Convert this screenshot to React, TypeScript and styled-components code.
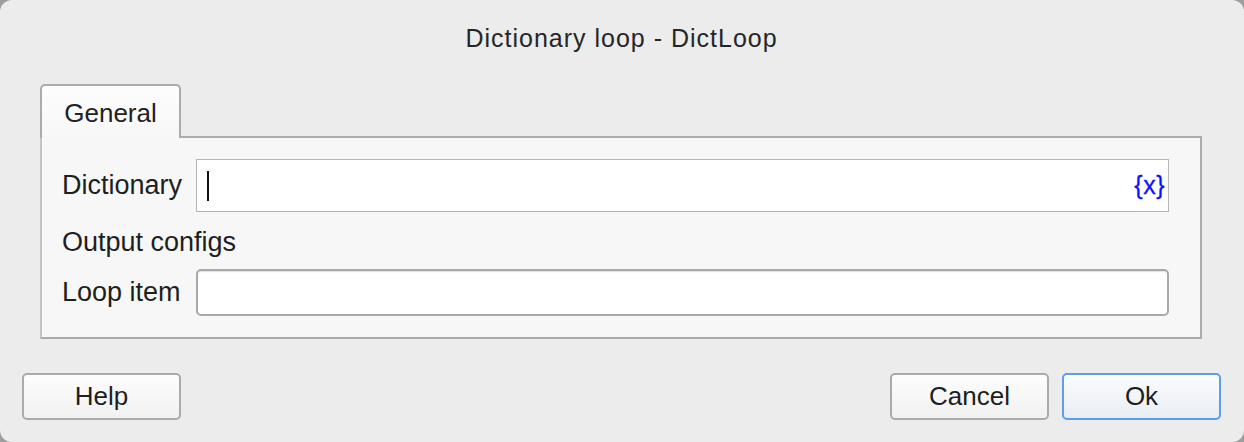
import React from "react";
import styled, { createGlobalStyle } from "styled-components";

const GlobalStyle = createGlobalStyle`
  html, body {
    margin: 0;
    padding: 0;
    background: #9e9e9e;
  }
  body {
    font-family: "Liberation Sans", Arial, sans-serif;
  }
`;

const Window = styled.div`
  box-sizing: border-box;
  width: 1244px;
  height: 442px;
  display: flex;
  flex-direction: column;
  padding: 0 23px 0 22px;
  background: #ececec;
  border-radius: 12px;
  color: #1f1f1f;
`;

const Title = styled.div`
  height: 76px;
  padding-bottom: 8px;
  display: flex;
  align-items: center;
  justify-content: center;
  font-size: 25px;
  letter-spacing: 1px;
  color: #262626;
`;

const TabStrip = styled.div`
  display: flex;
  padding-left: 18px;
`;

const Tab = styled.div`
  box-sizing: border-box;
  width: 141px;
  height: 54px;
  margin-bottom: -2px;
  padding-top: 2px;
  position: relative;
  z-index: 1;
  display: flex;
  align-items: center;
  justify-content: center;
  font-size: 26px;
  color: #222;
  background: linear-gradient(#fdfdfd, #f7f7f7);
  border: 2px solid #ababab;
  border-bottom: none;
  border-radius: 5px 5px 0 0;
`;

const Panel = styled.div`
  box-sizing: border-box;
  margin: 0 19px 0 18px;
  height: 203px;
  padding: 21px 31px 0 20px;
  display: flex;
  flex-direction: column;
  background: #f7f7f7;
  border: 2px solid #ababab;
  border-left: 2px solid #c4c4c4;
`;

const Row = styled.div`
  display: flex;
  align-items: center;
  gap: 14px;
`;

const Label = styled.div`
  width: 120px;
  flex-shrink: 0;
  font-size: 27px;
  white-space: nowrap;
  color: #1e1e1e;
`;

const SectionLabel = styled.div`
  height: 30px;
  margin: 15px 0 12px;
  display: flex;
  align-items: center;
  font-size: 27px;
  color: #1e1e1e;
`;

const Field = styled.div<{ $rounded?: boolean; $height: number }>`
  box-sizing: border-box;
  flex: 1;
  height: ${(p) => p.$height}px;
  display: flex;
  align-items: center;
  padding: 0 3px 0 10px;
  background: #fff;
  border: ${(p) => (p.$rounded ? "2px solid #a9a9a9" : "1px solid #b6b6b6")};
  border-radius: ${(p) => (p.$rounded ? "5px" : "0")};
  box-shadow: ${(p) => (p.$rounded ? "inset 0 2px 1px -1px #e2e2e2" : "none")};
`;

const Caret = styled.span`
  width: 2px;
  height: 30px;
  background: #111;
`;

const VarButton = styled.span`
  margin-left: auto;
  font-size: 25px;
  color: #1010ff;
  letter-spacing: 0.5px;
  -webkit-text-stroke: 0.3px #1010ff;
`;

const Footer = styled.div`
  margin-top: 34px;
  display: flex;
  justify-content: space-between;
`;

const ButtonGroup = styled.div`
  display: flex;
  gap: 13px;
`;

const Button = styled.button<{ $primary?: boolean }>`
  box-sizing: border-box;
  width: 159px;
  height: 47px;
  font-family: "Liberation Sans", Arial, sans-serif;
  font-size: 26px;
  color: #1e1e1e;
  border-radius: 5px;
  border: ${(p) => (p.$primary ? "2px solid #5a9fea" : "2px solid #aaaaaa")};
  background: ${(p) =>
    p.$primary
      ? "linear-gradient(#fbfcfe, #e9edf2)"
      : "linear-gradient(#fdfdfd, #f1f1f1)"};
  padding: 0;
  cursor: pointer;
`;

export default function App() {
  return (
    <>
      <GlobalStyle />
      <Window>
        <Title>Dictionary loop - DictLoop</Title>
        <TabStrip>
          <Tab>General</Tab>
        </TabStrip>
        <Panel>
          <Row>
            <Label>Dictionary</Label>
            <Field $height={53}>
              <Caret />
              <VarButton>{"{x}"}</VarButton>
            </Field>
          </Row>
          <SectionLabel>Output configs</SectionLabel>
          <Row>
            <Label>Loop item</Label>
            <Field $rounded $height={47} />
          </Row>
        </Panel>
        <Footer>
          <Button>Help</Button>
          <ButtonGroup>
            <Button>Cancel</Button>
            <Button $primary>Ok</Button>
          </ButtonGroup>
        </Footer>
      </Window>
    </>
  );
}
